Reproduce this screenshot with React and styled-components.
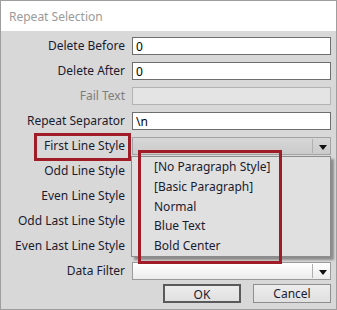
import styled, { createGlobalStyle } from "styled-components";

const GlobalStyle = createGlobalStyle`
  html, body {
    margin: 0;
    padding: 0;
    background: #ffffff;
  }
  * {
    box-sizing: border-box;
  }
`;

const fields = [
  { label: "Delete Before", kind: "text", value: "0" },
  { label: "Delete After", kind: "text", value: "0" },
  { label: "Fail Text", kind: "disabled", value: "" },
  { label: "Repeat Separator", kind: "text", value: "\\n" },
  { label: "First Line Style", kind: "open", highlight: true },
  { label: "Odd Line Style", kind: "hidden" },
  { label: "Even Line Style", kind: "hidden" },
  { label: "Odd Last Line Style", kind: "hidden" },
  { label: "Even Last Line Style", kind: "hidden" },
  { label: "Data Filter", kind: "combo" },
];

const styleOptions = [
  "[No Paragraph Style]",
  "[Basic Paragraph]",
  "Normal",
  "Blue Text",
  "Bold Center",
];

export default function App() {
  return (
    <>
      <GlobalStyle />
      <Window>
        <TitleBar>Repeat Selection</TitleBar>
        <Body>
          <Form>
            {fields.map((f) => (
              <Row key={f.label}>
                <Label $disabled={f.kind === "disabled"} $highlight={f.highlight}>
                  {f.label}
                </Label>
                {f.kind === "text" && <TextInput defaultValue={f.value} />}
                {f.kind === "disabled" && <TextInput disabled />}
                {f.kind === "combo" && (
                  <Combo>
                    <ComboArrow />
                  </Combo>
                )}
                {f.kind === "open" && (
                  <Combo $open>
                    <ComboArrow />
                    <List>
                      {styleOptions.map((o) => (
                        <ListItem key={o}>{o}</ListItem>
                      ))}
                      <Callout />
                    </List>
                  </Combo>
                )}
                {f.kind === "hidden" && <Spacer />}
              </Row>
            ))}
          </Form>
          <Buttons>
            <Button $default>OK</Button>
            <Button>Cancel</Button>
          </Buttons>
        </Body>
      </Window>
    </>
  );
}

const Window = styled.div`
  width: 337px;
  height: 310px;
  border: 1px solid #9e9e9e;
  display: flex;
  flex-direction: column;
  font-family: "Noto Sans", "Open Sans", sans-serif;
  font-size: 12px;
  color: #1b1b2f;
`;

const TitleBar = styled.div`
  height: 30px;
  flex-shrink: 0;
  background: #ffffff;
  color: #9a9a9a;
  padding-left: 8px;
  display: flex;
  align-items: center;
  font-size: 12px;
`;

const Body = styled.div`
  flex: 1;
  background: #d8d8d8;
  padding: 6px 5px 0 0;
  display: flex;
  flex-direction: column;
  gap: 4px;
`;

const Form = styled.div`
  display: flex;
  flex-direction: column;
  gap: 7px;
`;

const Row = styled.div`
  display: grid;
  grid-template-columns: 124px 1fr;
  column-gap: 7px;
  height: 18px;
  align-items: center;
`;

const Label = styled.div`
  position: relative;
  text-align: right;
  white-space: nowrap;
  line-height: 18px;
  color: ${(p) => (p.$disabled ? "#7d7d7d" : "#1b1b2f")};

  ${(p) =>
    p.$highlight &&
    `
    &::after {
      content: "";
      position: absolute;
      left: 33px;
      right: -6px;
      top: -4px;
      bottom: -6px;
      border: 3px solid #a01c26;
    }
  `}
`;

const TextInput = styled.input`
  height: 18px;
  width: 100%;
  border: 1px solid ${(p) => (p.disabled ? "#b3b3b3" : "#6e6e6e")};
  background: ${(p) => (p.disabled ? "#e4e4e4" : "#ffffff")};
  font-family: inherit;
  font-size: 12px;
  color: #000000;
  padding: 0 3px;
  outline: none;
`;

const Combo = styled.div`
  position: relative;
  height: 18px;
  border: 1px solid ${(p) => (p.$open ? "#a3a3a3" : "#9a9a9a")};
  background: ${(p) =>
    p.$open
      ? "linear-gradient(#d6d6d6, #cbcbcb)"
      : "linear-gradient(#ffffff, #ececec)"};
`;

const ComboArrow = styled.div`
  position: absolute;
  right: 0;
  top: 1px;
  bottom: 1px;
  width: 18px;
  border-left: 1px solid #b0b0b0;
  &::after {
    content: "";
    position: absolute;
    left: 6px;
    top: 6px;
    border-left: 4px solid transparent;
    border-right: 4px solid transparent;
    border-top: 5px solid #111111;
  }
`;

const List = styled.div`
  position: absolute;
  left: -2px;
  right: -1px;
  top: 18px;
  z-index: 2;
  background: #e0e0e0;
  border: 1px solid #8c8c8c;
  box-shadow: 3px 3px 2px rgba(0, 0, 0, 0.35);
  padding: 0 0 0 22px;
`;

const ListItem = styled.div`
  height: 19.75px;
  line-height: 19.75px;
  color: #1b1b2f;
  white-space: nowrap;
`;

const Callout = styled.div`
  position: absolute;
  left: 6px;
  top: -7px;
  width: 144px;
  height: 114px;
  border: 3px solid #a01c26;
  pointer-events: none;
`;

const Spacer = styled.div`
  height: 18px;
`;

const Buttons = styled.div`
  display: flex;
  justify-content: flex-end;
  gap: 12px;
`;

const Button = styled.button`
  width: 78px;
  height: 19px;
  font-family: inherit;
  font-size: 12px;
  color: #1b1b2f;
  padding: 0;
  background: linear-gradient(#ececec, #e0e0e0);
  border: ${(p) => (p.$default ? "2px solid #5a5a5a" : "1px solid #8e8e8e")};
  border-radius: 0;
`;
